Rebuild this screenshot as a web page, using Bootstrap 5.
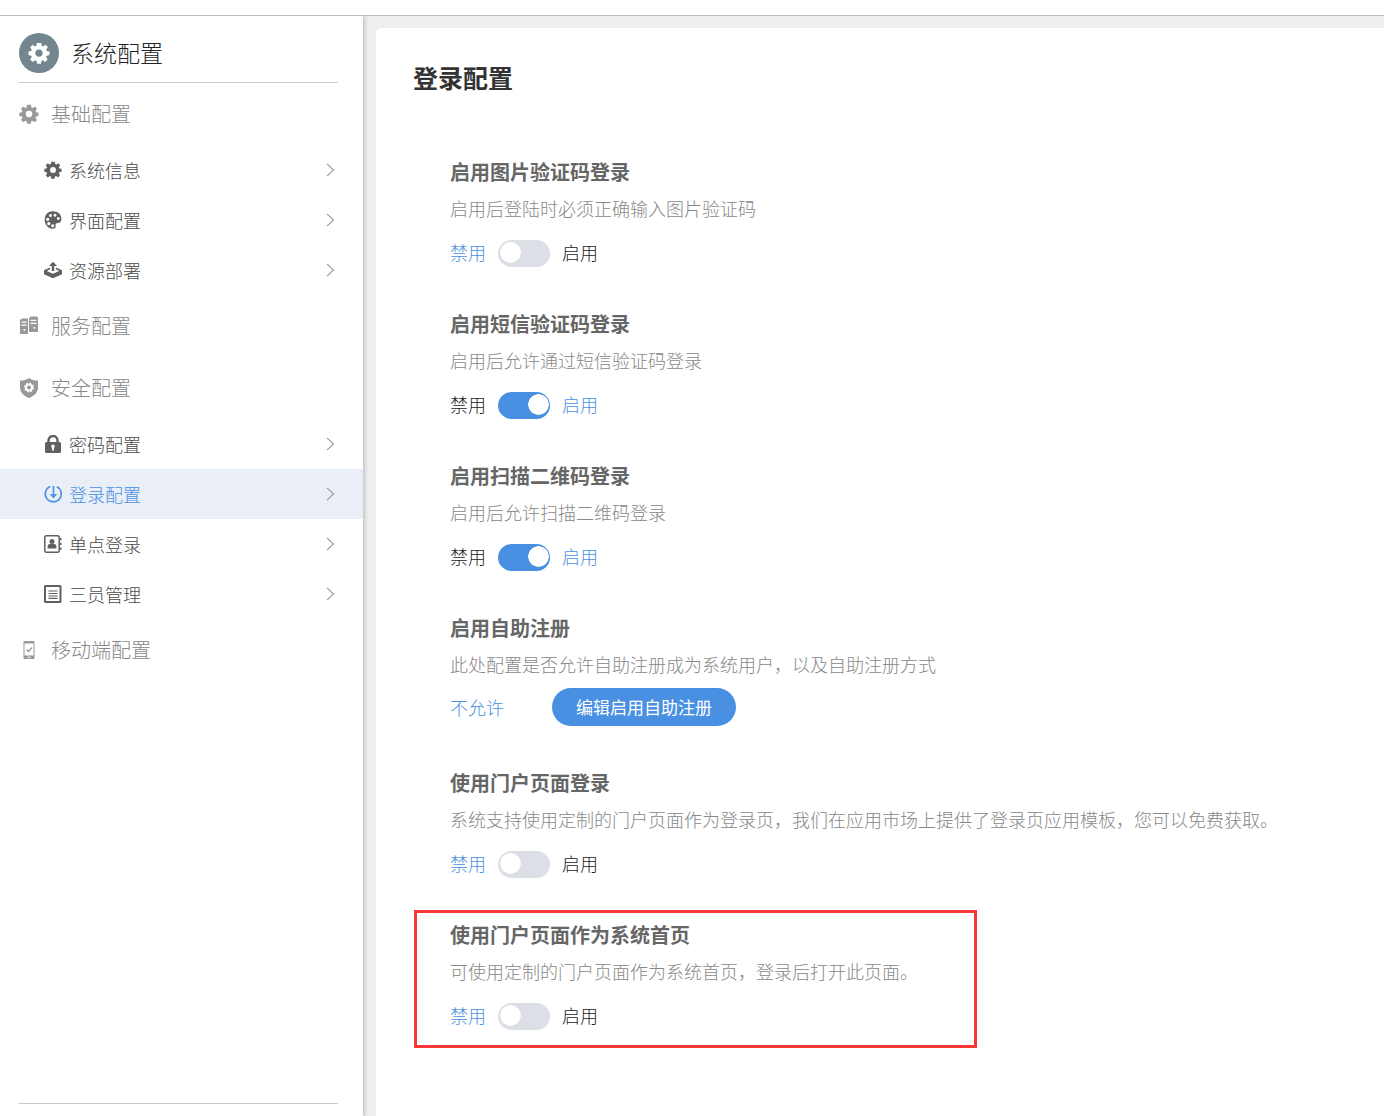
<!DOCTYPE html>
<html lang="zh-CN">
<head>
<meta charset="utf-8">
<meta name="viewport" content="width=device-width, initial-scale=1">
<title>登录配置</title>
<link href="https://cdn.jsdelivr.net/npm/bootstrap@5.3.0/dist/css/bootstrap.min.css" rel="stylesheet">
<style>
  :root { --accent: #4a90e2; --rule: #c9c9c9; }
  body { font-family: "Noto Sans CJK SC", sans-serif; font-weight: 300; font-size: 18px; line-height: 30px; color: #222; background: #efefef; }
  .top-strip { height: 16px; background: #fff; border-bottom: 1px solid #bbb; }
  .side-panel { width: 363px; background: #fff; box-shadow: 1px 0 5px rgba(0,0,0,.25); }
  .side-head { height: 67px; margin: 0 25px 0 19px; padding-top: 8px; gap: 12px; border-bottom: 1px solid var(--rule); }
  .side-head h1 { font-size: 23px; font-weight: 300; color: #222; }
  .side-logo { width: 40px; height: 40px; border-radius: 50%; background: #738690; color: #fff; }
  .group-name { height: 62px; padding-left: 19px; gap: 12px; font-size: 20px; font-weight: 300; color: #888; }
  .group-name svg { color: #999; }
  .side-link { height: 50px; padding: 0 28px 0 43px; gap: 6px; color: #4a4a4a; text-decoration: none; }
  .side-link svg { color: #606060; }
  .side-link .chev { color: #999; }
  .side-link.active { background: #eaeff7; color: var(--accent); }
  .side-link.active svg:not(.chev) { color: var(--accent); }
  .side-foot { margin: 0 25px 0 19px; height: 13px; border-top: 1px solid var(--rule); }
  .main-area { padding: 12px 0 0 13px; min-width: 0; }
  .sheet { background: #fff; border-radius: 5px 0 0 0; padding: 34px 37px; }
  .sheet h2 { font-size: 25px; font-weight: 700; color: #333; margin-bottom: 65px; }
  .settings { padding-left: 37px; }
  .setting { padding-bottom: 42px; }
  .setting h3 { font-size: 20px; line-height: 30px; font-weight: 700; color: #666; margin-bottom: 6px; }
  .setting p { color: #888; margin-bottom: 17px; }
  .setting p.tight { margin-bottom: 9px; }
  .switch-line { gap: 12px; height: 27px; line-height: 24px; }
  .tint { color: var(--accent); }
  .form-check-input.toggle { width: 52px; height: 27px; margin: 0; border: 0; border-radius: 14px; background: #dcdfe6 radial-gradient(circle closest-side, #fff 95%, transparent) 2px 2px / 21px 21px no-repeat; cursor: pointer; }
  .form-check-input.toggle:checked { background-color: var(--accent); background-position: 30px 2px; }
  .pill { height: 38px; padding: 0 24px; border: 0; font-size: 17px; font-weight: 400; line-height: 38px; --bs-btn-bg: var(--accent); }
  .reg-line { gap: 48px; }
  .marker { inset: -10px auto 24px -36px; width: 563px; border: 3px solid #fa3737; pointer-events: none; }
</style>
<script src="https://cdn.jsdelivr.net/npm/bootstrap@5.3.0/dist/js/bootstrap.bundle.min.js"></script>
</head>
<body>
<svg class="d-none" aria-hidden="true">
  <symbol id="gear" viewBox="0 0 20 20"><path fill="currentColor" fill-rule="evenodd" d="M8 .8h4l.5 2.6 1.3.6 2.2-1.5L18 4.800l-1.500 2.200.5 1.200 2.500.5v3.200l-2.500.5-.6 1.300 1.500 2.200-2.300 2.300-2.200-1.500-1.200.6-.5 2.500H8.200l-.5-2.500-1.300-.6-2.200 1.500L2 15.900l1.500-2.200-.6-1.300-2.500-.5V8.700l2.500-.5.5-1.200L2 4.800l2.200-2.300L6.300 4l1.300-.6zM10 6.800a3.300 3.300 0 1 0 0 6.600 3.300 3.300 0 0 0 0-6.600z"/></symbol>
  <symbol id="palette" viewBox="0 0 18 18"><path fill="currentColor" fill-rule="evenodd" d="M9 .2C4 .2.700 3.700.700 8.500c0 5.200 3.500 9.300 7.900 9.300 2.400 0 3.400-1.300 3-3-.4-1.800.4-2.700 2.200-2.700 2.300 0 3.600-1.600 3.600-4.300C17.400 3.300 13.900.2 9 .2zM6.500 3a1.500 1.500 0 1 0 .01 0zM11 2.700a1.500 1.500 0 1 0 .01 0zM3.700 6.800a1.600 1.600 0 1 0 .01 0zM14.300 6a1.500 1.500 0 1 0 .01 0zM4.800 11a1.600 1.600 0 1 0 .01 0zM8.700 13.200a1.600 1.600 0 1 0 .01 0z"/></symbol>
  <symbol id="deploy" viewBox="0 0 18 18"><path fill="currentColor" d="M9 .7 13 5h-2.800v5H7.800V5H5z"/><path fill="currentColor" fill-rule="evenodd" d="M6 6.500v1.700L2.800 10 9 12.800 15.200 10 12 8.200V6.500l6 2.800v3.900L9 17.300 0 13.200V9.300z"/></symbol>
  <symbol id="servers" viewBox="0 0 20 20"><path fill="currentColor" fill-rule="evenodd" d="M1 4l2-1.500h6V18H1zM2.500 5.500v1.300h5V5.500zm0 3v1.300h5V8.500zm2 4.500v1.700h1.700V13zM10 2l1.500-1.500H18L19 2v14h-9zm1.500 1.700V5h6V3.700zm0 3V8h6V6.700zm3 4.300v1.700h1.700V11z"/></symbol>
  <symbol id="shield" viewBox="0 0 20 20"><path fill="currentColor" d="M10 0c2.500 1.900 5.500 2.500 9 2.600v6.600c0 5-3.500 8.500-9 10.800C4.500 17.700 1 14.200 1 9.200V2.600C4.500 2.500 7.500 1.900 10 0z"/><circle cx="10" cy="9.500" r="3" fill="none" stroke="#fff" stroke-width="2"/><circle cx="10" cy="9.500" r="4.300" fill="none" stroke="#fff" stroke-width="1.300" stroke-dasharray="1.700 1.677"/></symbol>
  <symbol id="lock" viewBox="0 0 18 18"><path fill="none" stroke="currentColor" stroke-width="2.400" d="M4.500 8V5.500a4.500 4.500 0 0 1 9 0V8"/><path fill="currentColor" fill-rule="evenodd" d="M2.500 7h13q1.500 0 1.500 1.500v8q0 1.500-1.500 1.500h-13Q1 18 1 16.500v-8Q1 7 2.500 7zM9 9.500a1.800 1.800 0 0 0-1 3.300V15.500h2v-2.700a1.800 1.800 0 0 0-1-3.300z"/></symbol>
  <symbol id="login" viewBox="0 0 18 18"><g fill="none" stroke="currentColor" stroke-width="1.600"><path d="M6.200 1.500a8 8 0 1 0 6.600 0.200M9.500 1v10.500"/></g><path fill="currentColor" d="M5.800 9h2.400l1.300 1.300L10.800 9h2.400l-3.700 4.600z"/></symbol>
  <symbol id="contact" viewBox="0 0 18 18"><rect x=".8" y=".8" width="14.400" height="16.400" rx="1.500" fill="none" stroke="currentColor" stroke-width="1.500"/><circle cx="8" cy="6.500" r="2.500" fill="currentColor"/><path fill="currentColor" d="M3.600 13.500V11q0-2 2.500-2h3.800q2.500 0 2.500 2v2.500zM16 3h1.500v2.200H16zm0 4.800h1.500V10H16zm0 4.800h1.500v2.200H16z"/></symbol>
  <symbol id="listbox" viewBox="0 0 18 18"><rect x="1" y="1" width="15.500" height="16" rx=".5" fill="none" stroke="currentColor" stroke-width="2"/><path stroke="currentColor" stroke-width="1.200" d="M4.500 6h9M4.500 8.500h9M4.500 11h9M4.500 13.400h9"/></symbol>
  <symbol id="phone" viewBox="0 0 20 20"><path fill="currentColor" fill-rule="evenodd" d="M5.500 1h9q1 0 1 1v16q0 1-1 1h-9q-1 0-1-1V2q0-1 1-1zm0 2.500v12h9v-12zM8.500 16.800v1h3v-1z"/><path fill="none" stroke="currentColor" stroke-width="1.200" d="m7.500 9.500 2 2 3.500-4"/></symbol>
  <symbol id="chev" viewBox="0 0 9 14"><path fill="none" stroke="currentColor" stroke-width="1.100" d="m1 .8 6.500 6.200L1 13.200"/></symbol>
</svg>
<div class="d-flex flex-column min-vh-100">
  <header class="top-strip position-relative z-1"></header>
  <div class="d-flex flex-grow-1">
    <aside class="side-panel d-flex flex-column flex-shrink-0">
      <div class="side-head d-flex align-items-center">
        <span class="side-logo d-flex align-items-center justify-content-center"><svg width="22" height="22"><use href="#gear"/></svg></span>
        <h1 class="m-0">系统配置</h1>
      </div>
      <nav>
        <h2 class="group-name d-flex align-items-center m-0"><svg width="20" height="20"><use href="#gear"/></svg>基础配置</h2>
        <a href="#" class="side-link d-flex align-items-center"><svg width="20" height="18"><use href="#gear"/></svg>系统信息<svg class="chev ms-auto" width="9" height="14"><use href="#chev"/></svg></a>
        <a href="#" class="side-link d-flex align-items-center"><svg width="20" height="18"><use href="#palette"/></svg>界面配置<svg class="chev ms-auto" width="9" height="14"><use href="#chev"/></svg></a>
        <a href="#" class="side-link d-flex align-items-center"><svg width="20" height="18"><use href="#deploy"/></svg>资源部署<svg class="chev ms-auto" width="9" height="14"><use href="#chev"/></svg></a>
        <h2 class="group-name d-flex align-items-center m-0"><svg width="20" height="20"><use href="#servers"/></svg>服务配置</h2>
        <h2 class="group-name d-flex align-items-center m-0"><svg width="20" height="20"><use href="#shield"/></svg>安全配置</h2>
        <a href="#" class="side-link d-flex align-items-center"><svg width="20" height="18"><use href="#lock"/></svg>密码配置<svg class="chev ms-auto" width="9" height="14"><use href="#chev"/></svg></a>
        <a href="#" class="side-link d-flex align-items-center active" aria-current="page"><svg width="20" height="18"><use href="#login"/></svg>登录配置<svg class="chev ms-auto" width="9" height="14"><use href="#chev"/></svg></a>
        <a href="#" class="side-link d-flex align-items-center"><svg width="20" height="18"><use href="#contact"/></svg>单点登录<svg class="chev ms-auto" width="9" height="14"><use href="#chev"/></svg></a>
        <a href="#" class="side-link d-flex align-items-center"><svg width="20" height="18"><use href="#listbox"/></svg>三员管理<svg class="chev ms-auto" width="9" height="14"><use href="#chev"/></svg></a>
        <h2 class="group-name d-flex align-items-center m-0"><svg width="20" height="20"><use href="#phone"/></svg>移动端配置</h2>
      </nav>
      <div class="side-foot mt-auto"></div>
    </aside>
    <main class="main-area flex-grow-1 d-flex">
      <div class="sheet flex-grow-1">
        <h2>登录配置</h2>
        <div class="settings">
          <section class="setting">
            <h3>启用图片验证码登录</h3>
            <p>启用后登陆时必须正确输入图片验证码</p>
            <div class="switch-line d-flex align-items-start"><span class="tint">禁用</span><input class="form-check-input toggle" type="checkbox" role="switch" id="s1"><label for="s1">启用</label></div>
          </section>
          <section class="setting">
            <h3>启用短信验证码登录</h3>
            <p>启用后允许通过短信验证码登录</p>
            <div class="switch-line d-flex align-items-start"><span>禁用</span><input class="form-check-input toggle" type="checkbox" role="switch" id="s2" checked><label class="tint" for="s2">启用</label></div>
          </section>
          <section class="setting">
            <h3>启用扫描二维码登录</h3>
            <p>启用后允许扫描二维码登录</p>
            <div class="switch-line d-flex align-items-start"><span>禁用</span><input class="form-check-input toggle" type="checkbox" role="switch" id="s3" checked><label class="tint" for="s3">启用</label></div>
          </section>
          <section class="setting">
            <h3>启用自助注册</h3>
            <p class="tight">此处配置是否允许自助注册成为系统用户，以及自助注册方式</p>
            <div class="reg-line d-flex align-items-center"><span class="tint">不允许</span><button type="button" class="btn btn-primary rounded-pill pill">编辑启用自助注册</button></div>
          </section>
          <section class="setting">
            <h3>使用门户页面登录</h3>
            <p>系统支持使用定制的门户页面作为登录页，我们在应用市场上提供了登录页应用模板，您可以免费获取。</p>
            <div class="switch-line d-flex align-items-start"><span class="tint">禁用</span><input class="form-check-input toggle" type="checkbox" role="switch" id="s4"><label for="s4">启用</label></div>
          </section>
          <section class="setting position-relative">
            <h3>使用门户页面作为系统首页</h3>
            <p>可使用定制的门户页面作为系统首页，登录后打开此页面。</p>
            <div class="switch-line d-flex align-items-start"><span class="tint">禁用</span><input class="form-check-input toggle" type="checkbox" role="switch" id="s5"><label for="s5">启用</label></div>
            <div class="marker position-absolute"></div>
          </section>
        </div>
      </div>
    </main>
  </div>
</div>
</body>
</html>
